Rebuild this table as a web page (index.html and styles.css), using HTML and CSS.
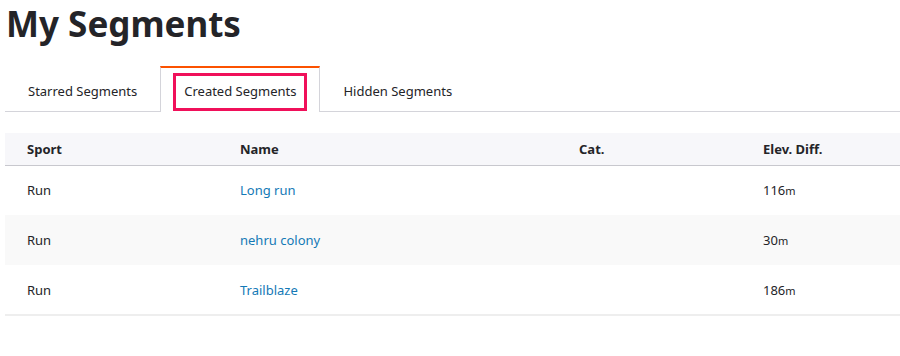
FILE: index.html
```html
<!DOCTYPE html>
<html>
<head>
<meta charset="utf-8">
<link rel="stylesheet" href="styles.css">
</head>
<body>
<div class="page">
  <h1 class="title">My Segments</h1>
  <ul class="tabs">
    <li class="tab">Starred Segments</li>
    <li class="tab active">Created Segments<span class="highlight"></span></li>
    <li class="tab">Hidden Segments</li>
  </ul>
  <div class="table">
    <div class="row head">
      <div class="cell">Sport</div>
      <div class="cell">Name</div>
      <div class="cell">Cat.</div>
      <div class="cell">Elev. Diff.</div>
    </div>
    <div class="row first">
      <div class="cell">Run</div>
      <div class="cell"><a class="link">Long run</a></div>
      <div class="cell"></div>
      <div class="cell">116<span class="unit">m</span></div>
    </div>
    <div class="row alt">
      <div class="cell">Run</div>
      <div class="cell"><a class="link">nehru colony</a></div>
      <div class="cell"></div>
      <div class="cell">30<span class="unit">m</span></div>
    </div>
    <div class="row last">
      <div class="cell">Run</div>
      <div class="cell"><a class="link">Trailblaze</a></div>
      <div class="cell"></div>
      <div class="cell">186<span class="unit">m</span></div>
    </div>
  </div>
</div>
</body>
</html>
```
FILE: styles.css
```css
html, body {
  margin: 0;
  padding: 0;
  background: #fff;
}
body {
  font-family: "Noto Sans", "Open Sans", sans-serif;
  color: #242428;
  font-size: 13px;
}
.page {
  padding-left: 5px;
}
.title {
  margin: 0;
  padding-left: 1px;
  font-size: 35px;
  font-weight: 700;
  line-height: 48px;
  height: 66px;
  color: #242428;
}
.tabs {
  list-style: none;
  margin: 0;
  padding: 0;
  display: flex;
  border-bottom: 1px solid #d4d4da;
}
.tab {
  position: relative;
  padding: 0 22px;
  height: 43px;
  line-height: 46px;
  border: 1px solid transparent;
  border-top: 2px solid transparent;
  border-bottom: 0;
  margin-bottom: -1px;
  color: #242428;
}
.tab.active {
  padding: 0 23px;
  border-color: #d4d4da;
  border-top-color: #fc5200;
  background: #fff;
  height: 44px;
}
.highlight {
  position: absolute;
  left: 12px;
  top: 5px;
  width: 128px;
  height: 32px;
  border: 3px solid #f0105a;
}
.table {
  margin-top: 21px;
}
.row {
  display: grid;
  grid-template-columns: 213px 339px 184px 1fr;
  height: 49px;
  align-items: center;
  border-bottom: 1px solid transparent;
}
.row.head {
  height: 32px;
  background: #f7f7fa;
  border-bottom: 1px solid #c8c8ce;
  font-weight: 700;
}
.row.first {
  height: 48px;
}
.row.alt {
  background: #f9f9f9;
}
.row.last {
  border-bottom: 2px solid #eeeeee;
}
.cell {
  padding-left: 22px;
}
.link {
  color: #1479b6;
  text-decoration: none;
}
.unit {
  font-size: 11px;
}
```
